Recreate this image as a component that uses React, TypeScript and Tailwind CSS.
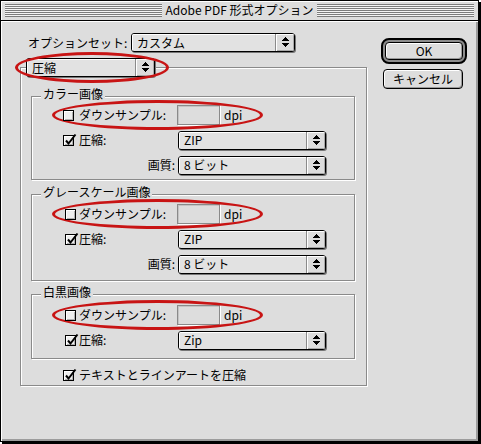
import React from "react";

function Arrows() {
  return (
    <svg width="7" height="11" viewBox="0 0 7 11" shapeRendering="crispEdges">
      <rect x="3" y="0" width="1" height="1" fill="#000" />
      <rect x="2" y="1" width="3" height="1" fill="#000" />
      <rect x="1" y="2" width="5" height="1" fill="#000" />
      <rect x="0" y="3" width="7" height="1" fill="#000" />
      <rect x="0" y="6" width="7" height="1" fill="#000" />
      <rect x="1" y="7" width="5" height="1" fill="#000" />
      <rect x="2" y="8" width="3" height="1" fill="#000" />
      <rect x="3" y="9" width="1" height="1" fill="#000" />
    </svg>
  );
}

function Popup({ text, className }: { text: string; className: string }) {
  return (
    <div
      className={`flex h-[19px] shrink-0 overflow-hidden rounded-[3px] border border-black bg-[#e2e2e2] shadow-[1px_1px_0_#777] ${className}`}
    >
      <div className="flex flex-1 items-center pl-[5px] shadow-[inset_1px_1px_0_#fff]">{text}</div>
      <div className="flex w-[19px] items-center justify-center border-l border-[#8a8a8a] bg-[#dcdcdc] shadow-[inset_1px_1px_0_#fff,inset_-1px_-1px_0_#a8a8a8]">
        <Arrows />
      </div>
    </div>
  );
}

function Check({ checked, className = "" }: { checked?: boolean; className?: string }) {
  return (
    <div
      className={`relative h-[11px] w-[11px] shrink-0 border border-black bg-[#eeeeee] shadow-[inset_1px_1px_0_#fff,inset_-1px_-1px_0_#b0b0b0] ${className}`}
    >
      {checked && (
        <svg className="absolute left-[0px] top-[-3px]" width="13" height="13" viewBox="0 0 13 13">
          <path d="M2 7.5 L4.5 10.5 L11.5 1.5" fill="none" stroke="#000" strokeWidth="2" />
        </svg>
      )}
    </div>
  );
}

function Ellipse({ className }: { className: string }) {
  return <div className={`pointer-events-none absolute rounded-[50%] border-[3px] border-[#c81414] ${className}`} />;
}

function Group({
  label,
  className,
  children,
}: {
  label: string;
  className: string;
  children: React.ReactNode;
}) {
  return (
    <div
      className={`relative ml-[10px] w-[324px] border border-[#8a8a8a] shadow-[1px_1px_0_#fff,inset_1px_1px_0_#fff] ${className}`}
    >
      <span className="absolute left-[9px] top-[-10px] h-[14px] bg-[#dddddd] px-[2px] leading-[14px]">{label}</span>
      {children}
    </div>
  );
}

function DownRow({ shift }: { shift?: boolean }) {
  return (
    <div className="flex h-[20px] items-center pl-[31px]">
      <div className="flex w-[16px]">
        <Check className={shift ? "ml-[2px]" : ""} />
      </div>
      <span className="w-[98px] whitespace-nowrap">ダウンサンプル:</span>
      <div className="h-[20px] w-[43px] border border-[#8a8a8a] bg-[#dddddd] shadow-[1px_1px_0_#fff,inset_1px_1px_0_#c4c4c4]" />
      <span className="ml-[4px]">dpi</span>
    </div>
  );
}

function CompRow({ text, shift }: { text: string; shift?: boolean }) {
  return (
    <div className="flex h-[20px] items-center pl-[31px]">
      <div className="flex w-[115px] items-center">
        <div className="flex w-[16px]">
          <Check checked className={shift ? "ml-[2px]" : ""} />
        </div>
        <span>圧縮:</span>
      </div>
      <Popup text={text} className="w-[148px]" />
    </div>
  );
}

function QualRow() {
  return (
    <div className="flex h-[20px] items-center pl-[31px]">
      <div className="w-[115px] pr-[3px] text-right">画質:</div>
      <Popup text="8 ビット" className="w-[148px]" />
    </div>
  );
}

export default function App() {
  return (
    <div className="h-[444px] w-[481px] bg-white font-['Noto_Sans_CJK_JP','Noto_Sans',sans-serif] text-[12px] leading-[14px] text-black">
      <div className="flex h-[442px] w-[479px] flex-col border border-black bg-[#dddddd] shadow-[2px_2px_0_#000]">
        {/* title bar */}
        <div className="flex h-[20px] shrink-0 items-start border-b border-black bg-[#dddddd] px-[4px] pt-[3px] shadow-[inset_1px_1px_0_#fff]">
          <div className="h-[13px] flex-1 bg-[repeating-linear-gradient(to_bottom,#7c7c7c_0px,#7c7c7c_1px,#f4f4f4_1px,#f4f4f4_2px)]" />
          <div className="-mt-[1px] px-[4px] leading-[14px]">Adobe PDF 形式オプション</div>
          <div className="h-[13px] flex-1 bg-[repeating-linear-gradient(to_bottom,#7c7c7c_0px,#7c7c7c_1px,#f4f4f4_1px,#f4f4f4_2px)]" />
        </div>

        {/* content */}
        <div className="flex flex-1 pl-[19px] shadow-[inset_1px_1px_0_#fff,inset_-2px_-2px_0_#9c9c9c]">
          {/* left column */}
          <div className="flex w-[349px] flex-col pt-[12px]">
            <div className="flex h-[19px] items-center pl-[8px]">
              <span className="w-[103px] whitespace-nowrap">オプションセット:</span>
              <Popup text="カスタム" className="w-[164px]" />
            </div>

            <div className="relative mt-[15px] flex h-[319px] w-[347px] flex-col border border-[#8a8a8a] pt-[28px] shadow-[1px_1px_0_#fff,inset_1px_1px_0_#fff]">
              <div className="absolute left-[5px] top-[-10px]">
                <Popup text="圧縮" className="w-[129px]" />
              </div>
              <Ellipse className="left-[-6px] top-[-16px] h-[31px] w-[154px]" />

              <Group label="カラー画像" className="flex flex-col gap-[5px] pb-[4px] pt-[8px]">
                <Ellipse className="left-[20px] top-[3px] h-[30px] w-[211px]" />
                <DownRow />
                <CompRow text="ZIP" />
                <QualRow />
              </Group>

              <Group label="グレースケール画像" className="mt-[14px] flex flex-col gap-[5px] pb-[6px] pt-[9px]">
                <Ellipse className="left-[20px] top-[4px] h-[30px] w-[211px]" />
                <DownRow shift />
                <CompRow text="ZIP" shift />
                <QualRow />
              </Group>

              <Group label="白黒画像" className="mt-[13px] flex flex-col gap-[5px] pb-[8px] pt-[10px]">
                <Ellipse className="left-[20px] top-[5px] h-[30px] w-[211px]" />
                <DownRow shift />
                <CompRow text="Zip" shift />
              </Group>

              <div className="mt-[9px] flex h-[14px] items-center pl-[42px]">
                <div className="flex w-[16px]">
                  <Check checked />
                </div>
                <span>テキストとラインアートを圧縮</span>
              </div>
            </div>
          </div>

          {/* right column */}
          <div className="ml-[12px] flex flex-col pt-[17px]">
            <div className="h-[26px] w-[86px] rounded-[8px] border-2 border-black bg-[#8c8c8c] p-[2px]">
              <div className="flex h-full w-full items-center justify-center rounded-[4px] border border-black bg-[#dddddd] shadow-[inset_1px_1px_0_#fff,inset_-1px_-1px_0_#9a9a9a]">
                OK
              </div>
            </div>
            <div className="ml-[2px] mt-[5px] flex h-[20px] w-[80px] items-center justify-center rounded-[4px] border border-black bg-[#dddddd] shadow-[inset_1px_1px_0_#fff,inset_-1px_-1px_0_#9a9a9a]">
              キャンセル
            </div>
          </div>
        </div>
      </div>
    </div>
  );
}
